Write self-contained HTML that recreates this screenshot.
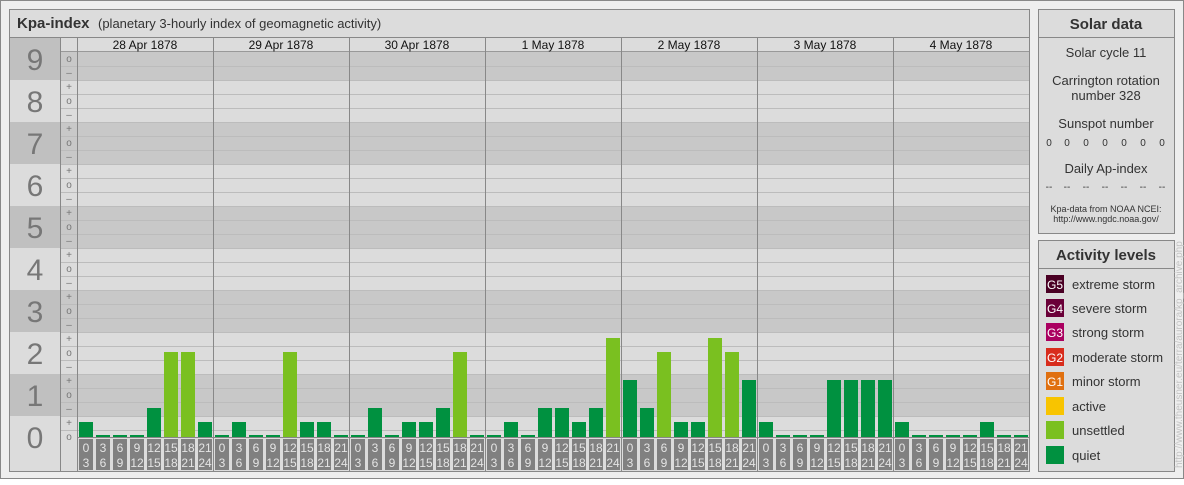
<!DOCTYPE html>
<html><head><meta charset="utf-8"><style>
body{margin:0;width:1184px;height:480px;background:#fff;font-family:"Liberation Sans",sans-serif;overflow:hidden}
svg text{font-family:"Liberation Sans",sans-serif}
</style></head><body>
<svg width="1184" height="480" xmlns="http://www.w3.org/2000/svg">
<rect x="0.5" y="0.5" width="1183" height="478" fill="#eeeeee" stroke="#888"/>
<!-- main panel -->
<rect x="9.5" y="9.5" width="1020" height="462" fill="#dcdcdc" stroke="#888"/>
<line x1="9" y1="37.5" x2="1029" y2="37.5" stroke="#888"/>
<text x="17" y="28" font-size="15" font-weight="bold" fill="#333">Kpa-index</text>
<text x="98" y="28" font-size="13" fill="#333">(planetary 3-hourly index of geomagnetic activity)</text>
<!-- bands -->
<g fill="#c8c8c8">
<rect x="77" y="52" width="952" height="28"/>
<rect x="77" y="122" width="952" height="42"/>
<rect x="77" y="206" width="952" height="42"/>
<rect x="77" y="290" width="952" height="42"/>
<rect x="77" y="374" width="952" height="42"/>
<rect x="10" y="38" width="50" height="42" fill="#c0c0c0"/>
<rect x="10" y="122" width="50" height="42" fill="#c0c0c0"/>
<rect x="10" y="206" width="50" height="42" fill="#c0c0c0"/>
<rect x="10" y="290" width="50" height="42" fill="#c0c0c0"/>
<rect x="10" y="374" width="50" height="42" fill="#c0c0c0"/>
<rect x="61" y="52" width="16" height="28"/>
<rect x="61" y="122" width="16" height="42"/>
<rect x="61" y="206" width="16" height="42"/>
<rect x="61" y="290" width="16" height="42"/>
<rect x="61" y="374" width="16" height="42"/>
</g>
<g stroke="#bcbcbc" stroke-width="1">
<path d="M61 66.5H1029M61 80.5H1029M61 94.5H1029M61 108.5H1029M61 122.5H1029M61 136.5H1029M61 150.5H1029M61 164.5H1029M61 178.5H1029M61 192.5H1029M61 206.5H1029M61 220.5H1029M61 234.5H1029M61 248.5H1029M61 262.5H1029M61 276.5H1029M61 290.5H1029M61 304.5H1029M61 318.5H1029M61 332.5H1029M61 346.5H1029M61 360.5H1029M61 374.5H1029M61 388.5H1029M61 402.5H1029M61 416.5H1029M61 430.5H1029"/>
</g>
<line x1="61" y1="51.5" x2="1029" y2="51.5" stroke="#999"/>
<g stroke="#888"><line x1="60.5" y1="37" x2="60.5" y2="471"/><line x1="77.5" y1="37" x2="77.5" y2="471"/>
<line x1="213.5" y1="37" x2="213.5" y2="471"/><line x1="349.5" y1="37" x2="349.5" y2="471"/><line x1="485.5" y1="37" x2="485.5" y2="471"/><line x1="621.5" y1="37" x2="621.5" y2="471"/><line x1="757.5" y1="37" x2="757.5" y2="471"/><line x1="893.5" y1="37" x2="893.5" y2="471"/>
<line x1="77" y1="437.5" x2="1029" y2="437.5"/></g>
<g font-size="30" fill="#777" text-anchor="middle">
<text x="35" y="70">9</text><text x="35" y="112">8</text><text x="35" y="154">7</text><text x="35" y="196">6</text><text x="35" y="238">5</text><text x="35" y="280">4</text><text x="35" y="322">3</text><text x="35" y="364">2</text><text x="35" y="406">1</text><text x="35" y="448">0</text>
</g>
<g font-size="10" fill="#777" text-anchor="middle">
<text x="69" y="62">o</text><text x="69" y="76">–</text><text x="69" y="90">+</text><text x="69" y="104">o</text><text x="69" y="118">–</text><text x="69" y="132">+</text><text x="69" y="146">o</text><text x="69" y="160">–</text><text x="69" y="174">+</text><text x="69" y="188">o</text><text x="69" y="202">–</text><text x="69" y="216">+</text><text x="69" y="230">o</text><text x="69" y="244">–</text><text x="69" y="258">+</text><text x="69" y="272">o</text><text x="69" y="286">–</text><text x="69" y="300">+</text><text x="69" y="314">o</text><text x="69" y="328">–</text><text x="69" y="342">+</text><text x="69" y="356">o</text><text x="69" y="370">–</text><text x="69" y="384">+</text><text x="69" y="398">o</text><text x="69" y="412">–</text><text x="69" y="426">+</text><text x="69" y="440">o</text>
</g>
<g font-size="12" fill="#111" text-anchor="middle">
<text x="145" y="49">28 Apr 1878</text><text x="281" y="49">29 Apr 1878</text><text x="417" y="49">30 Apr 1878</text><text x="553" y="49">1 May 1878</text><text x="689" y="49">2 May 1878</text><text x="825" y="49">3 May 1878</text><text x="961" y="49">4 May 1878</text>
</g>
<!-- bars -->
<g fill="#009140">
<rect x="79" y="422" width="14" height="15"/><rect x="96" y="435" width="14" height="2"/><rect x="113" y="435" width="14" height="2"/><rect x="130" y="435" width="14" height="2"/><rect x="147" y="408" width="14" height="29"/><rect x="198" y="422" width="14" height="15"/>
<rect x="215" y="435" width="14" height="2"/><rect x="232" y="422" width="14" height="15"/><rect x="249" y="435" width="14" height="2"/><rect x="266" y="435" width="14" height="2"/><rect x="300" y="422" width="14" height="15"/><rect x="317" y="422" width="14" height="15"/><rect x="334" y="435" width="14" height="2"/>
<rect x="351" y="435" width="14" height="2"/><rect x="368" y="408" width="14" height="29"/><rect x="385" y="435" width="14" height="2"/><rect x="402" y="422" width="14" height="15"/><rect x="419" y="422" width="14" height="15"/><rect x="436" y="408" width="14" height="29"/><rect x="470" y="435" width="14" height="2"/>
<rect x="487" y="435" width="14" height="2"/><rect x="504" y="422" width="14" height="15"/><rect x="521" y="435" width="14" height="2"/><rect x="538" y="408" width="14" height="29"/><rect x="555" y="408" width="14" height="29"/><rect x="572" y="422" width="14" height="15"/><rect x="589" y="408" width="14" height="29"/>
<rect x="623" y="380" width="14" height="57"/><rect x="640" y="408" width="14" height="29"/><rect x="674" y="422" width="14" height="15"/><rect x="691" y="422" width="14" height="15"/><rect x="742" y="380" width="14" height="57"/>
<rect x="759" y="422" width="14" height="15"/><rect x="776" y="435" width="14" height="2"/><rect x="793" y="435" width="14" height="2"/><rect x="810" y="435" width="14" height="2"/><rect x="827" y="380" width="14" height="57"/><rect x="844" y="380" width="14" height="57"/><rect x="861" y="380" width="14" height="57"/><rect x="878" y="380" width="14" height="57"/>
<rect x="895" y="422" width="14" height="15"/><rect x="912" y="435" width="14" height="2"/><rect x="929" y="435" width="14" height="2"/><rect x="946" y="435" width="14" height="2"/><rect x="963" y="435" width="14" height="2"/><rect x="980" y="422" width="14" height="15"/><rect x="997" y="435" width="14" height="2"/><rect x="1014" y="435" width="14" height="2"/>
</g>
<g fill="#7ac020">
<rect x="164" y="352" width="14" height="85"/><rect x="181" y="352" width="14" height="85"/>
<rect x="283" y="352" width="14" height="85"/>
<rect x="453" y="352" width="14" height="85"/>
<rect x="606" y="338" width="14" height="99"/>
<rect x="657" y="352" width="14" height="85"/><rect x="708" y="338" width="14" height="99"/><rect x="725" y="352" width="14" height="85"/>
</g>
<!-- time labels -->
<g id="d0" transform="translate(77,0)">
<g fill="#808080"><rect x="2" y="439" width="14" height="31"/><rect x="19" y="439" width="14" height="31"/><rect x="36" y="439" width="14" height="31"/><rect x="53" y="439" width="14" height="31"/><rect x="70" y="439" width="14" height="31"/><rect x="87" y="439" width="14" height="31"/><rect x="104" y="439" width="14" height="31"/><rect x="121" y="439" width="14" height="31"/></g>
<g font-size="12" fill="#e4e4e4" text-anchor="middle"><text x="9" y="452">0</text><text x="9" y="467">3</text><text x="26" y="452">3</text><text x="26" y="467">6</text><text x="43" y="452">6</text><text x="43" y="467">9</text><text x="60" y="452">9</text><text x="60" y="467">12</text><text x="77" y="452">12</text><text x="77" y="467">15</text><text x="94" y="452">15</text><text x="94" y="467">18</text><text x="111" y="452">18</text><text x="111" y="467">21</text><text x="128" y="452">21</text><text x="128" y="467">24</text></g>
</g>
<g transform="translate(213,0)">
<g fill="#808080"><rect x="2" y="439" width="14" height="31"/><rect x="19" y="439" width="14" height="31"/><rect x="36" y="439" width="14" height="31"/><rect x="53" y="439" width="14" height="31"/><rect x="70" y="439" width="14" height="31"/><rect x="87" y="439" width="14" height="31"/><rect x="104" y="439" width="14" height="31"/><rect x="121" y="439" width="14" height="31"/></g>
<g font-size="12" fill="#e4e4e4" text-anchor="middle"><text x="9" y="452">0</text><text x="9" y="467">3</text><text x="26" y="452">3</text><text x="26" y="467">6</text><text x="43" y="452">6</text><text x="43" y="467">9</text><text x="60" y="452">9</text><text x="60" y="467">12</text><text x="77" y="452">12</text><text x="77" y="467">15</text><text x="94" y="452">15</text><text x="94" y="467">18</text><text x="111" y="452">18</text><text x="111" y="467">21</text><text x="128" y="452">21</text><text x="128" y="467">24</text></g>
</g>
<g transform="translate(349,0)">
<g fill="#808080"><rect x="2" y="439" width="14" height="31"/><rect x="19" y="439" width="14" height="31"/><rect x="36" y="439" width="14" height="31"/><rect x="53" y="439" width="14" height="31"/><rect x="70" y="439" width="14" height="31"/><rect x="87" y="439" width="14" height="31"/><rect x="104" y="439" width="14" height="31"/><rect x="121" y="439" width="14" height="31"/></g>
<g font-size="12" fill="#e4e4e4" text-anchor="middle"><text x="9" y="452">0</text><text x="9" y="467">3</text><text x="26" y="452">3</text><text x="26" y="467">6</text><text x="43" y="452">6</text><text x="43" y="467">9</text><text x="60" y="452">9</text><text x="60" y="467">12</text><text x="77" y="452">12</text><text x="77" y="467">15</text><text x="94" y="452">15</text><text x="94" y="467">18</text><text x="111" y="452">18</text><text x="111" y="467">21</text><text x="128" y="452">21</text><text x="128" y="467">24</text></g>
</g>
<g transform="translate(485,0)">
<g fill="#808080"><rect x="2" y="439" width="14" height="31"/><rect x="19" y="439" width="14" height="31"/><rect x="36" y="439" width="14" height="31"/><rect x="53" y="439" width="14" height="31"/><rect x="70" y="439" width="14" height="31"/><rect x="87" y="439" width="14" height="31"/><rect x="104" y="439" width="14" height="31"/><rect x="121" y="439" width="14" height="31"/></g>
<g font-size="12" fill="#e4e4e4" text-anchor="middle"><text x="9" y="452">0</text><text x="9" y="467">3</text><text x="26" y="452">3</text><text x="26" y="467">6</text><text x="43" y="452">6</text><text x="43" y="467">9</text><text x="60" y="452">9</text><text x="60" y="467">12</text><text x="77" y="452">12</text><text x="77" y="467">15</text><text x="94" y="452">15</text><text x="94" y="467">18</text><text x="111" y="452">18</text><text x="111" y="467">21</text><text x="128" y="452">21</text><text x="128" y="467">24</text></g>
</g>
<g transform="translate(621,0)">
<g fill="#808080"><rect x="2" y="439" width="14" height="31"/><rect x="19" y="439" width="14" height="31"/><rect x="36" y="439" width="14" height="31"/><rect x="53" y="439" width="14" height="31"/><rect x="70" y="439" width="14" height="31"/><rect x="87" y="439" width="14" height="31"/><rect x="104" y="439" width="14" height="31"/><rect x="121" y="439" width="14" height="31"/></g>
<g font-size="12" fill="#e4e4e4" text-anchor="middle"><text x="9" y="452">0</text><text x="9" y="467">3</text><text x="26" y="452">3</text><text x="26" y="467">6</text><text x="43" y="452">6</text><text x="43" y="467">9</text><text x="60" y="452">9</text><text x="60" y="467">12</text><text x="77" y="452">12</text><text x="77" y="467">15</text><text x="94" y="452">15</text><text x="94" y="467">18</text><text x="111" y="452">18</text><text x="111" y="467">21</text><text x="128" y="452">21</text><text x="128" y="467">24</text></g>
</g>
<g transform="translate(757,0)">
<g fill="#808080"><rect x="2" y="439" width="14" height="31"/><rect x="19" y="439" width="14" height="31"/><rect x="36" y="439" width="14" height="31"/><rect x="53" y="439" width="14" height="31"/><rect x="70" y="439" width="14" height="31"/><rect x="87" y="439" width="14" height="31"/><rect x="104" y="439" width="14" height="31"/><rect x="121" y="439" width="14" height="31"/></g>
<g font-size="12" fill="#e4e4e4" text-anchor="middle"><text x="9" y="452">0</text><text x="9" y="467">3</text><text x="26" y="452">3</text><text x="26" y="467">6</text><text x="43" y="452">6</text><text x="43" y="467">9</text><text x="60" y="452">9</text><text x="60" y="467">12</text><text x="77" y="452">12</text><text x="77" y="467">15</text><text x="94" y="452">15</text><text x="94" y="467">18</text><text x="111" y="452">18</text><text x="111" y="467">21</text><text x="128" y="452">21</text><text x="128" y="467">24</text></g>
</g>
<g transform="translate(893,0)">
<g fill="#808080"><rect x="2" y="439" width="14" height="31"/><rect x="19" y="439" width="14" height="31"/><rect x="36" y="439" width="14" height="31"/><rect x="53" y="439" width="14" height="31"/><rect x="70" y="439" width="14" height="31"/><rect x="87" y="439" width="14" height="31"/><rect x="104" y="439" width="14" height="31"/><rect x="121" y="439" width="14" height="31"/></g>
<g font-size="12" fill="#e4e4e4" text-anchor="middle"><text x="9" y="452">0</text><text x="9" y="467">3</text><text x="26" y="452">3</text><text x="26" y="467">6</text><text x="43" y="452">6</text><text x="43" y="467">9</text><text x="60" y="452">9</text><text x="60" y="467">12</text><text x="77" y="452">12</text><text x="77" y="467">15</text><text x="94" y="452">15</text><text x="94" y="467">18</text><text x="111" y="452">18</text><text x="111" y="467">21</text><text x="128" y="452">21</text><text x="128" y="467">24</text></g>
</g>
<!-- Solar data -->
<rect x="1038.5" y="9.5" width="136" height="224" fill="#dcdcdc" stroke="#888"/>
<line x1="1038" y1="37.5" x2="1175" y2="37.5" stroke="#888"/>
<g text-anchor="middle" fill="#333">
<text x="1106" y="29" font-size="15" font-weight="bold">Solar data</text>
<text x="1106" y="57" font-size="13">Solar cycle 11</text>
<text x="1106" y="85" font-size="13">Carrington rotation</text>
<text x="1106" y="100" font-size="13">number 328</text>
<text x="1106" y="128" font-size="13">Sunspot number</text>
<text x="1106" y="173" font-size="13">Daily Ap-index</text>
<text x="1106" y="212" font-size="9">Kpa-data from NOAA NCEI:</text>
<text x="1106" y="222" font-size="9">http://www.ngdc.noaa.gov/</text>
</g>
<g text-anchor="middle" fill="#333" font-size="10">
<text x="1049" y="146">0</text><text x="1067" y="146">0</text><text x="1086" y="146">0</text><text x="1105" y="146">0</text><text x="1124" y="146">0</text><text x="1143" y="146">0</text><text x="1162" y="146">0</text>
<text x="1049" y="190">--</text><text x="1067" y="190">--</text><text x="1086" y="190">--</text><text x="1105" y="190">--</text><text x="1124" y="190">--</text><text x="1143" y="190">--</text><text x="1162" y="190">--</text>
</g>
<!-- Activity -->
<rect x="1038.5" y="240.5" width="136" height="231" fill="#dcdcdc" stroke="#888"/>
<line x1="1038" y1="268.5" x2="1175" y2="268.5" stroke="#888"/>
<text x="1106" y="260" font-size="15" font-weight="bold" fill="#333" text-anchor="middle">Activity levels</text>
<rect x="1046" y="275" width="18" height="18" fill="#4a0024"/>
<rect x="1046" y="299" width="18" height="18" fill="#6a0038"/>
<rect x="1046" y="323" width="18" height="18" fill="#aa0060"/>
<rect x="1046" y="348" width="18" height="18" fill="#d82c1c"/>
<rect x="1046" y="372" width="18" height="18" fill="#e07010"/>
<rect x="1046" y="397" width="18" height="18" fill="#f8c400"/>
<rect x="1046" y="421" width="18" height="18" fill="#7ac020"/>
<rect x="1046" y="446" width="18" height="18" fill="#009140"/>
<g font-size="12" fill="#fff" text-anchor="middle"><text x="1055" y="289">G5</text><text x="1055" y="313">G4</text><text x="1055" y="337">G3</text><text x="1055" y="362">G2</text><text x="1055" y="386">G1</text></g>
<g font-size="13" fill="#333"><text x="1072" y="289">extreme storm</text><text x="1072" y="313">severe storm</text><text x="1072" y="337">strong storm</text><text x="1072" y="362">moderate storm</text><text x="1072" y="386">minor storm</text><text x="1072" y="411">active</text><text x="1072" y="435">unsettled</text><text x="1072" y="460">quiet</text></g>
<text transform="translate(1182,468) rotate(-90)" font-size="10" fill="#c4c4c4">http://www.theusner.eu/terra/aurora/kp_archive.php</text>
</svg>
</body></html>
